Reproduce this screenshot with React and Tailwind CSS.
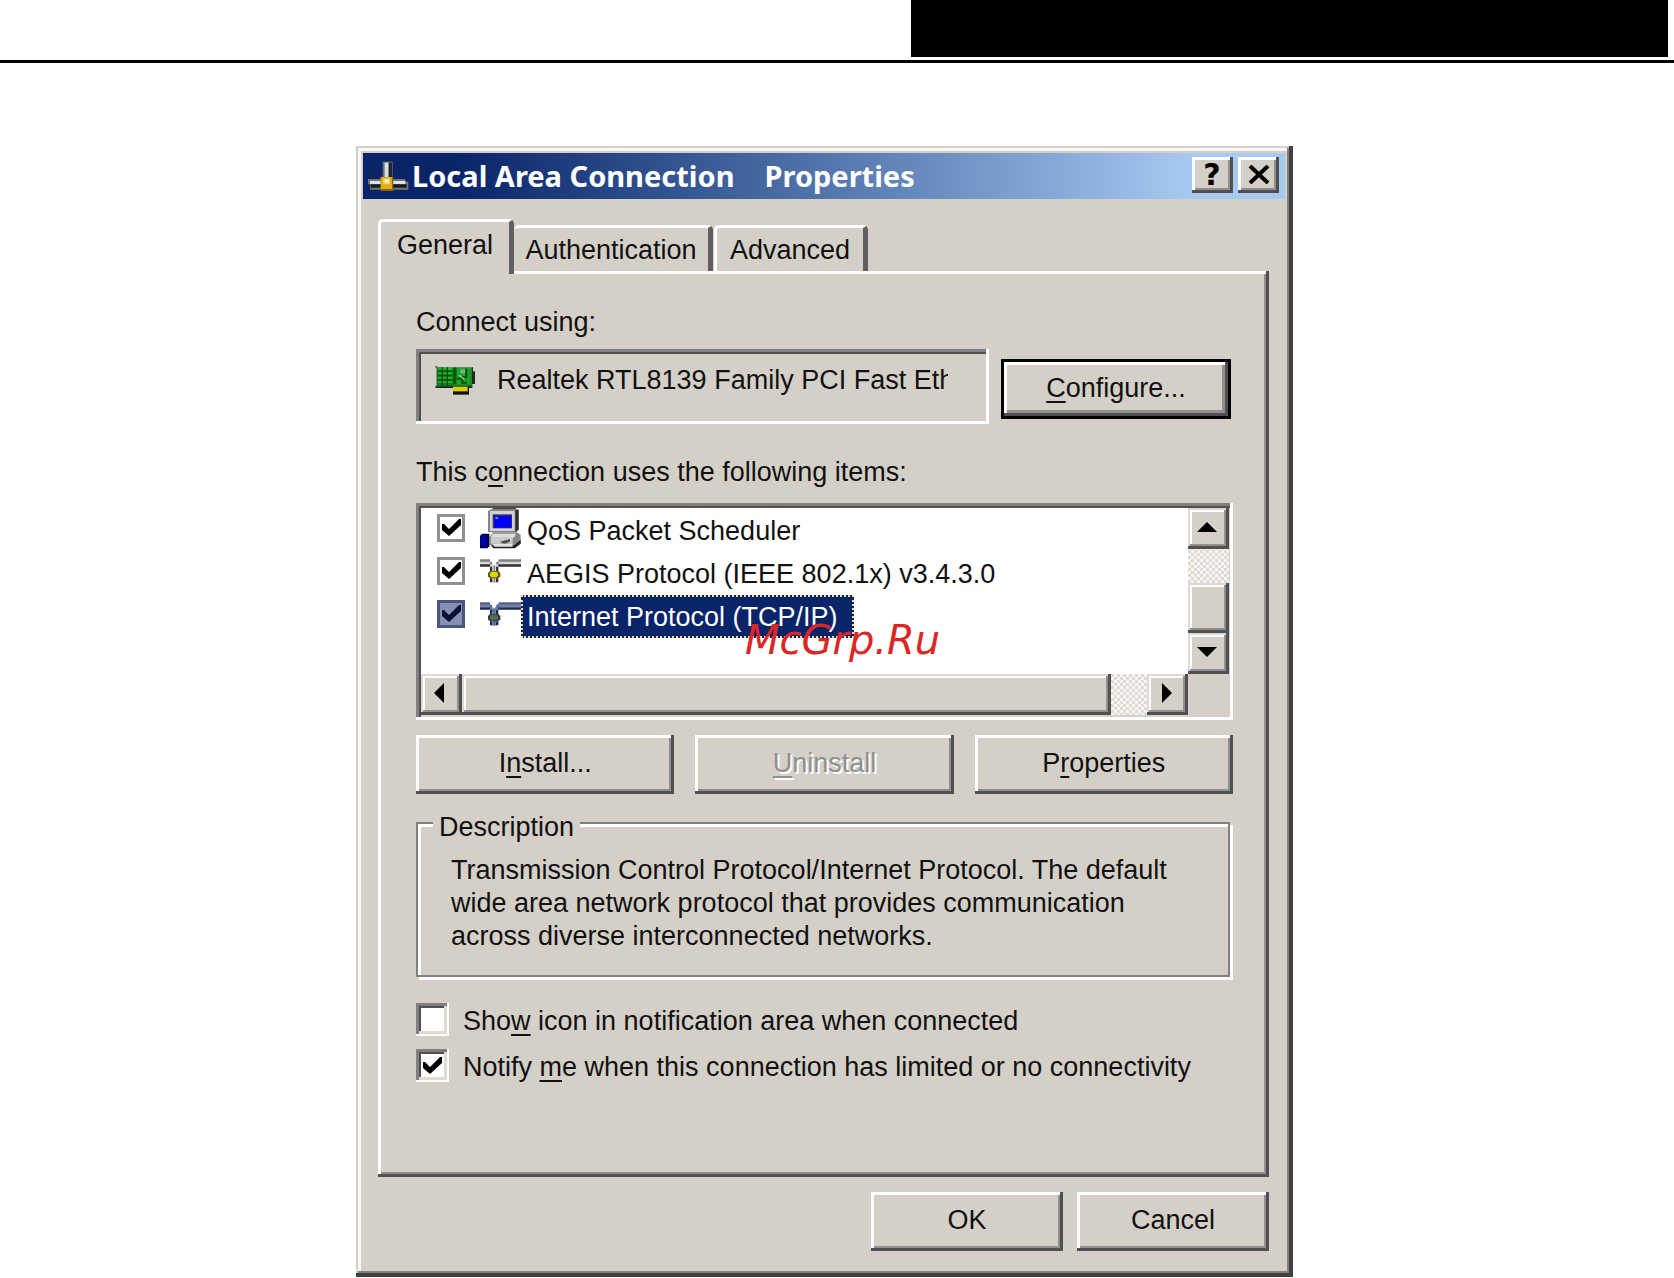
import React, { useState } from "react";

const raised =
  "bg-[#d4d0c8] shadow-[inset_-3px_-3px_0_#505050,inset_3px_3px_0_#ffffff,inset_-5px_-5px_0_#909090]";

const scrollRaised =
  "bg-[#d4d0c8] shadow-[inset_-3px_-3px_0_#505050,inset_2px_2px_0_#dedbd4,inset_-5px_-5px_0_#909090,inset_4px_4px_0_#ffffff]";

const sunken =
  "shadow-[inset_-3px_-3px_0_#ffffff,inset_3px_3px_0_#808080,inset_5px_5px_0_#505050]";

const track =
  "bg-[repeating-conic-gradient(#f6f5f2_0_25%,#dedbd4_0_50%)] bg-[length:6px_6px]";

const items = [
  { id: "qos", name: "QoS Packet Scheduler", Icon: ComputerIcon },
  { id: "aegis", name: "AEGIS Protocol (IEEE 802.1x) v3.4.3.0", Icon: ProtocolIcon },
  { id: "tcpip", name: "Internet Protocol (TCP/IP)", Icon: ProtocolIcon },
];

export default function App() {
  return (
    <div className="min-h-screen bg-white font-['Liberation_Sans',Arial,sans-serif] text-[27px] leading-[33px] text-[#111111]">
      <header className="flex justify-end border-b-[3px] border-black pr-1.5 pb-[3px]">
        <div className="h-[57px] w-[757px] bg-black" />
      </header>
      <main className="flex justify-center pt-[83px] pr-[25px]">
        <PropertiesDialog />
      </main>
    </div>
  );
}

const PropertiesDialog = () => {
  return (
    <section
      role="dialog"
      aria-labelledby="dialog-title"
      className="w-full max-w-[937px] bg-[#d4d0c8] pt-[7px] pr-2 pb-[26px] pl-[7px] shadow-[inset_-4px_-4px_0_#404040,inset_2px_2px_0_#d4d0c8,inset_-6px_-6px_0_#808080,inset_5px_5px_0_#f8f8f6]"
    >
      <TitleBar />
      <div className="pt-5 pr-4 pl-[15px]">
        <Tabs />
        <GeneralPanel />
        <div className="mt-[15px] flex justify-end gap-3.5">
          <PushButton className="w-48">OK</PushButton>
          <PushButton className="w-48">Cancel</PushButton>
        </div>
      </div>
    </section>
  );
};

const TitleBar = () => {
  return (
    <div className="flex h-[46px] items-center bg-linear-to-r from-[#0a246a] from-10% to-[#a6caf0] to-90% pr-1.5 pl-[5px]">
      <ConnectionIcon />
      <h1
        id="dialog-title"
        className="ml-[3px] flex-1 pb-0.5 font-['Noto_Sans','Open_Sans',sans-serif] text-[29px] font-bold whitespace-nowrap text-white"
      >
        Local Area Connection
        <span className="ml-[30px]">Properties</span>
      </h1>
      <div className="-mt-0.5 flex gap-[5px]">
        <button
          aria-label="Help"
          className={`flex h-9 w-[41px] items-center justify-center pr-px pb-0.5 font-['DejaVu_Sans',sans-serif] text-[30px] font-bold text-black ${raised}`}
        >
          ?
        </button>
        <button
          aria-label="Close"
          className={`flex h-9 w-[41px] items-center justify-center pb-0.5 ${raised}`}
        >
          <svg width="22" height="19" viewBox="0 0 22 19" fill="none" stroke="#000" strokeWidth="4">
            <path d="M2 1 L20 18 M20 1 L2 18" />
          </svg>
        </button>
      </div>
    </div>
  );
};

const Tabs = () => {
  const tab =
    "rounded-t-[5px] bg-[#d4d0c8] border-t-[3px] border-t-white border-r-[5px] border-r-[#606060]";
  return (
    <div role="tablist" className="flex items-end">
      <button
        role="tab"
        aria-selected="true"
        className={`relative z-10 -mb-[3px] h-[55px] w-[136px] border-l-[3px] border-l-white pb-1.5 ${tab}`}
      >
        General
      </button>
      <button role="tab" aria-selected="false" className={`h-[46px] w-[199px] pt-0.5 ${tab}`}>
        Authentication
      </button>
      <button
        role="tab"
        aria-selected="false"
        className={`ml-px h-[46px] w-[154px] border-l-[3px] border-l-white pt-0.5 ${tab}`}
      >
        Advanced
      </button>
    </div>
  );
};

const GeneralPanel = () => {
  return (
    <div role="tabpanel" className={`pt-[35px] pr-9 pb-[93px] pl-[38px] ${raised}`}>
      <p>Connect using:</p>
      <div className="mt-2.5 flex gap-3">
        <div className={`flex h-[75px] flex-1 items-center pb-3 pl-[19px] ${sunken}`}>
          <CardIcon />
          <span className="ml-[22px] w-[451px] overflow-hidden whitespace-nowrap">
            Realtek RTL8139 Family PCI Fast Eth
          </span>
        </div>
        <button className="mt-2.5 mr-0.5 h-[60px] w-[230px] border-[3px] border-black bg-[#d4d0c8] pb-0.5 shadow-[inset_-3px_-3px_0_#505050,inset_3px_3px_0_#ffffff,inset_-6px_-6px_0_#909090]">
          <Key>C</Key>onfigure...
        </button>
      </div>

      <p id="items-label" className="mt-8">
        This c<Key>o</Key>nnection uses the following items:
      </p>
      <ItemList />

      <div className="mt-[15px] grid grid-cols-3 gap-[21px]">
        <PushButton>
          I<Key>n</Key>stall...
        </PushButton>
        <PushButton disabled>
          <Key>U</Key>ninstall
        </PushButton>
        <PushButton>
          P<Key>r</Key>operties
        </PushButton>
      </div>

      <fieldset className="mt-2 mr-[3px] border-2 border-[#808080] pr-6 pb-[22px] pl-[33px] shadow-[3px_3px_0_#ffffff,inset_3px_3px_0_#ffffff]">
        <legend className="-ml-[18px] bg-[#d4d0c8] px-1.5 pt-[9px]">Description</legend>
        <p className="pt-2.5">
          Transmission Control Protocol/Internet Protocol. The default
          <br />
          wide area network protocol that provides communication
          <br />
          across diverse interconnected networks.
        </p>
      </fieldset>

      <div className="mt-[26px] flex flex-col gap-[11px]">
        <Option>
          Sho<Key>w</Key> icon in notification area when connected
        </Option>
        <Option defaultChecked>
          Notify <Key>m</Key>e when this connection has limited or no connectivity
        </Option>
      </div>
    </div>
  );
};

// list of installed network components with both scroll bars
const ItemList = () => {
  const [selected, setselected] = useState("tcpip");

  return (
    <div className={`mt-3.5 bg-[#d4d0c8] pt-[5px] pr-1 pb-[5px] pl-[5px] ${sunken}`}>
      <div className="flex">
        <ul aria-labelledby="items-label" className="h-[166px] flex-1 overflow-hidden bg-white pt-px">
          {items.map(({ id, name, Icon }) => (
            <li
              key={id}
              onClick={() => setselected(id)}
              className="flex h-[43px] items-center pl-4"
            >
              <label className="mb-1.5 flex items-center">
                <span className="grid">
                  <input
                    type="checkbox"
                    defaultChecked
                    aria-label={name}
                    className={`peer col-start-1 row-start-1 h-7 w-7 appearance-none border-[3px] ${
                      selected === id
                        ? "border-[#47557f] bg-[#8490b4]"
                        : "border-[#909090] bg-white"
                    }`}
                  />
                  <CheckMark color={selected === id ? "#051235" : "#000000"} />
                </span>
                <span className="ml-[15px] w-[41px]">
                  <Icon dim={selected === id} />
                </span>
              </label>
              <span
                className={`flex h-[43px] items-center pt-0.5 pr-3.5 pl-1 whitespace-nowrap ${
                  selected === id
                    ? "border-2 border-dotted border-[#f0dc9a] bg-[#0a246a] text-white"
                    : "border-2 border-transparent"
                }`}
              >
                {name}
              </span>
            </li>
          ))}
        </ul>
        <div className={`flex w-[41px] flex-col ${track}`}>
          <ScrollButton label="Scroll up" points="10,5 20,15 0,15" />
          <div className={`mt-[34px] flex-1 ${scrollRaised}`} />
          <ScrollButton label="Scroll down" points="0,5 20,5 10,15" />
        </div>
      </div>
      <div className="flex pr-[41px]">
        <div className={`flex h-[41px] flex-1 ${track}`}>
          <ScrollButton label="Scroll left" points="14,0 14,20 4,10" />
          <div className={`mr-9 flex-1 ${scrollRaised}`} />
          <ScrollButton label="Scroll right" points="6,0 16,10 6,20" />
        </div>
      </div>
      <Watermark />
    </div>
  );
};

const Watermark = () => (
  <div className="relative h-0">
    <span className="absolute bottom-[53px] left-[324px] font-['DejaVu_Sans',sans-serif] text-[40px] leading-[44px] text-[#dc2626] italic">
      McGrp.Ru
    </span>
  </div>
);

const ScrollButton = ({ label, points }) => {
  return (
    <button
      aria-label={label}
      className={`flex h-[41px] w-[41px] shrink-0 items-center justify-center pr-1 pb-1 ${scrollRaised}`}
    >
      <svg width="20" height="20" viewBox="0 0 20 20" fill="#000">
        <polygon points={points} />
      </svg>
    </button>
  );
};

const PushButton = ({ children, className, disabled }) => {
  return (
    <button
      disabled={disabled}
      className={`h-[59px] pb-0.5 ${raised} ${
        disabled ? "text-[#909090] [text-shadow:2px_2px_0_#ffffff]" : ""
      } ${className || ""}`}
    >
      {children}
    </button>
  );
};

const Option = ({ children, defaultChecked }) => {
  return (
    <label className="flex items-start">
      <span className="grid">
        <input
          type="checkbox"
          defaultChecked={defaultChecked}
          className="peer col-start-1 row-start-1 h-[33px] w-[33px] appearance-none bg-white shadow-[inset_-2px_-2px_0_#ffffff,inset_3px_3px_0_#808080,inset_-5px_-5px_0_#dedbd4,inset_5px_5px_0_#505050]"
        />
        <CheckMark color="#000000" />
      </span>
      <span className="ml-3.5 pt-0.5 whitespace-nowrap">{children}</span>
    </label>
  );
};

const Key = ({ children }) => (
  <span className="underline decoration-2 underline-offset-4">{children}</span>
);

const CheckMark = ({ color }) => (
  <svg
    className="pointer-events-none invisible col-start-1 row-start-1 place-self-center peer-checked:visible"
    width="19"
    height="19"
    viewBox="0 0 19 19"
    fill={color}
  >
    <path d="M0 6 H2 L7 11 L17 1 H19 V7 L7 18 L0 12 Z" />
  </svg>
);

const ConnectionIcon = () => (
  <svg width="41" height="31" viewBox="0 0 123 93">
    <rect x="44" y="2" width="30" height="52" fill="#6f6f6f" />
    <rect x="50" y="5" width="12" height="46" fill="#d3e1ea" />
    <rect x="62" y="5" width="10" height="48" fill="#23252b" />
    <path d="M0 54 H112 V62 H121 V86 H6 V70 H0 Z" fill="#77746c" />
    <rect x="6" y="60" width="106" height="9" fill="#d5e6ef" />
    <rect x="8" y="70" width="108" height="10" fill="#16181f" />
    <rect x="38" y="48" width="38" height="42" fill="#8b6508" />
    <rect x="38" y="48" width="34" height="36" fill="#e2aa16" />
    <rect x="45" y="53" width="21" height="17" fill="#f8da62" />
    <rect x="51" y="55" width="11" height="9" fill="#fffbe0" />
  </svg>
);

const CardIcon = () => (
  <svg width="40" height="29" viewBox="0 0 120 87">
    <path d="M0 0 H8 V64 H0 V59 H4 V6 H0 Z" fill="#777777" />
    <rect x="6" y="4" width="104" height="60" fill="#0d7f18" />
    <path d="M110 4 H114 V16 H120 V54 H112 V66 H2 V61 H110 Z" fill="#1f2a20" />
    <path d="M10 9 H52 M10 22 H52 M10 35 H52 M10 48 H52" stroke="#21b52c" strokeWidth="6" />
    <path d="M22 4 V60 M37 4 V60 M8 16 H52 M8 29 H52 M8 42 H52" stroke="#064d0c" strokeWidth="4" />
    <path d="M56 4 V54 H62 V4 Z" fill="#064d0c" />
    <rect x="66" y="6" width="40" height="50" fill="#18a524" />
    <path d="M76 10 H90 V22 H76 Z" fill="#8da58c" />
    <path d="M94 8 V34 H74 M66 38 H82 V50 H96" stroke="#064d0c" strokeWidth="6" fill="none" />
    <path d="M72 28 L88 40" stroke="#b6d3b4" strokeWidth="4" />
    <rect x="54" y="62" width="48" height="24" fill="#151500" />
    <rect x="54" y="62" width="44" height="14" fill="#d8d000" />
  </svg>
);

function ComputerIcon() {
  return (
    <svg width="41" height="42" viewBox="0 0 123 126">
      <rect x="38" y="0" width="70" height="10" fill="#444444" />
      <path d="M24 12 L36 6 H116 V70 L108 76 H24 Z" fill="#858585" />
      <rect x="30" y="12" width="74" height="60" fill="#d2d2d2" />
      <path d="M106 10 H116 V66 L106 76 Z" fill="#2b2b2b" />
      <rect x="38" y="22" width="58" height="42" fill="#3b3b55" />
      <rect x="42" y="26" width="52" height="36" fill="#0000f4" />
      <path d="M46 30 H54 V36 H46 Z" fill="#4b9cff" />
      <path d="M40 76 H112 L122 84 V108 L106 122 H38 L28 112 V90 Z" fill="#868686" />
      <path d="M38 80 H108 L102 92 H32 Z" fill="#dddddd" />
      <path d="M32 92 H98 V110 H32 Z" fill="#cccccc" />
      <path d="M60 104 L90 96 V104 L72 112 Z" fill="#505050" />
      <path d="M36 114 H104 L122 98 V110 L104 124 H40 Z" fill="#202020" />
      <path d="M36 110 H98 V119 H44 Z" fill="#e4e4e4" />
      <path d="M0 86 L6 80 H28 V118 L22 124 H0 Z" fill="#000058" />
      <rect x="2" y="88" width="18" height="28" fill="#0000a8" />
    </svg>
  );
}

function ProtocolIcon({ dim }) {
  const dark = dim ? "#1c2a58" : "#303030";
  const mid = dim ? "#56628c" : "#808080";
  const light = dim ? "#7683a8" : "#d6d6d6";
  return (
    <svg width="41" height="24" viewBox="0 0 123 72">
      <path d="M0 4 H26 L42 20 L56 4 H123 V16 H62 L50 30 H36 L24 16 H0 Z" fill={light} />
      <path d="M0 1 H30 V8 H0 Z M56 1 H123 V8 H56 Z" fill={mid} />
      <path d="M0 16 H30 V23 H0 Z M55 16 H123 V23 H55 Z" fill={dark} />
      <path d="M30 8 H36 V16 H30 Z M49 8 H56 V16 H49 Z" fill={mid} />
      <path d="M30 23 H37 V38 H30 Z M48 23 H55 V38 H48 Z" fill={dark} />
      <rect x="37" y="24" width="11" height="47" fill={light} />
      <rect x="41" y="20" width="4" height="50" fill={mid} />
      <path d="M30 36 H55 L61 42 V52 L55 58 H30 L24 52 V42 Z" fill={dim ? "#2f3d46" : "#5c5a10"} />
      <path d="M34 38 H50 L54 43 V50 L50 55 H34 L30 50 V43 Z" fill={dim ? "#5b6a4e" : "#dcd400"} />
      <path d="M30 58 H37 V70 H30 Z M48 58 H55 V70 H48 Z" fill={dark} />
    </svg>
  );
}
